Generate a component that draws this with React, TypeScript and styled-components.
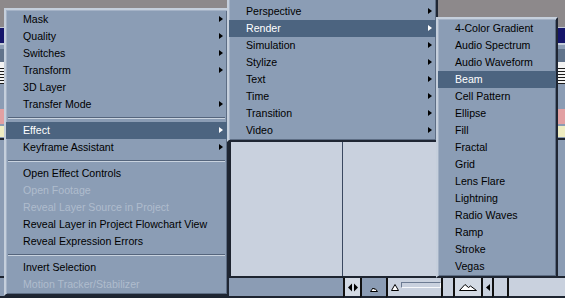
import React from "react";
import styled, { createGlobalStyle } from "styled-components";

const GlobalStyle = createGlobalStyle`
  html, body {
    margin: 0;
    padding: 0;
    background: #8b9cb4;
  }
`;

type MenuEntry =
  | { kind: "item"; label: string; sub?: boolean; active?: boolean; disabled?: boolean }
  | { kind: "sep" };

const item = (label: string, opts: { sub?: boolean; active?: boolean; disabled?: boolean } = {}): MenuEntry => ({
  kind: "item",
  label,
  ...opts,
});
const sep: MenuEntry = { kind: "sep" };

const layerMenu: MenuEntry[] = [
  item("Mask", { sub: true }),
  item("Quality", { sub: true }),
  item("Switches", { sub: true }),
  item("Transform", { sub: true }),
  item("3D Layer"),
  item("Transfer Mode", { sub: true }),
  sep,
  item("Effect", { sub: true, active: true }),
  item("Keyframe Assistant", { sub: true }),
  sep,
  item("Open Effect Controls"),
  item("Open Footage", { disabled: true }),
  item("Reveal Layer Source in Project", { disabled: true }),
  item("Reveal Layer in Project Flowchart View"),
  item("Reveal Expression Errors"),
  sep,
  item("Invert Selection"),
  item("Motion Tracker/Stabilizer", { disabled: true }),
];

// the list runs on above the screen edge, only the tail is visible
const effectMenu: MenuEntry[] = [
  "Perspective",
  "Render",
  "Simulation",
  "Stylize",
  "Text",
  "Time",
  "Transition",
  "Video",
].map((l) => item(l, { sub: true, active: l === "Render" }));

const renderMenu: MenuEntry[] = [
  "4-Color Gradient",
  "Audio Spectrum",
  "Audio Waveform",
  "Beam",
  "Cell Pattern",
  "Ellipse",
  "Fill",
  "Fractal",
  "Grid",
  "Lens Flare",
  "Lightning",
  "Radio Waves",
  "Ramp",
  "Stroke",
  "Vegas",
].map((l) => item(l, { active: l === "Beam" }));

/* ---------- background app ---------- */

const Screen = styled.div`
  position: relative;
  width: 565px;
  height: 298px;
  overflow: hidden;
  display: flex;
  flex-direction: column;
  background: #8b9cb4;
  font-family: "Liberation Sans", Arial, sans-serif;
`;

const TitleStrip = styled.div`
  height: 27px;
  flex: none;
  background: #8d898b;
  border-bottom: 1px solid #bfc8d4;
`;

const NavyBand = styled.div`
  height: 15px;
  flex: none;
  background: #15156a;
  border-bottom: 2px solid #c3ccd8;
`;

const TrackRow = styled.div<{ $h: number; $bg: string }>`
  height: ${(p) => p.$h}px;
  flex: none;
  background: ${(p) => p.$bg};
`;

const StripedRow = styled.div`
  height: 18px;
  flex: none;
  background: repeating-linear-gradient(
    to bottom,
    #f4f4f4 0px,
    #f4f4f4 2px,
    #1b1b1b 2px,
    #1b1b1b 3px
  );
`;

const Workspace = styled.div`
  height: 136px;
  flex: none;
  display: flex;
  border-top: 2px solid #1d2430;
`;

const LayerSide = styled.div`
  width: 229px;
  flex: none;
  background: #8b9cb4;
  border-right: 2px solid #1d2430;
`;

const GraphPanel = styled.div`
  flex: 1;
  display: flex;
  background: #c9d1de;
`;

const GraphColumn = styled.div`
  width: 111px;
  flex: none;
  border-right: 1px solid #3a4860;
`;

const GraphFill = styled.div`
  flex: 1;
`;

const ScrollColumn = styled.div`
  width: 8px;
  flex: none;
  background: #8b9cb4;
  border-left: 1px solid #2b3444;
`;

const BottomBar = styled.div`
  height: 20px;
  flex: none;
  display: flex;
  align-items: stretch;
  border-top: 2px solid #1d2430;
  background: #c9d1de;
`;

const BarSpacer = styled.div`
  width: 343px;
  flex: none;
  background: #8b9cb4;
  border-bottom: 2px solid #1d2430;
`;

const BarButton = styled.div<{ $w: number; $bg: string }>`
  width: ${(p) => p.$w}px;
  flex: none;
  display: flex;
  align-items: center;
  justify-content: center;
  background: ${(p) => p.$bg};
  border-left: 2px solid #111;
  border-bottom: 2px solid #1d2430;
`;

const SliderBox = styled.div`
  width: 50px;
  flex: none;
  display: flex;
  align-items: center;
  gap: 2px;
  padding-left: 3px;
  border-left: 2px solid #111;
  border-bottom: 2px solid #1d2430;
`;

const SliderTrack = styled.div`
  flex: 1;
  height: 4px;
  margin-top: -4px;
  border: 1px solid #f6f8fb;
  border-left-color: #6c7b92;
  border-top-color: #6c7b92;
`;

const BarFill = styled.div`
  flex: 1;
  border-left: 2px solid #111;
  border-bottom: 2px solid #1d2430;
`;

/* ---------- menus ---------- */

const MenuPanel = styled.div<{ $left: number; $top: number; $width: number; $openTop?: boolean }>`
  position: absolute;
  left: ${(p) => p.$left}px;
  top: ${(p) => p.$top}px;
  width: ${(p) => p.$width}px;
  box-sizing: border-box;
  padding: ${(p) => (p.$openTop ? "3px 0 1px" : "1px 0")};
  background: #8b9db5;
  border: 2px solid;
  border-top-width: ${(p) => (p.$openTop ? "0" : "2px")};
  border-color: #c5cfdc #1f2633 #1f2633 #c5cfdc;
  box-shadow: inset 1px ${(p) => (p.$openTop ? "0" : "1px")} 0 #a4b2c6, inset -1px -1px 0 #5d6d84;
`;

const MenuRow = styled.div<{ $active?: boolean; $disabled?: boolean }>`
  position: relative;
  height: 17px;
  line-height: 17px;
  padding-left: 17px;
  font-size: 10.6px;
  white-space: nowrap;
  background: ${(p) => (p.$active ? "#4c6480" : "transparent")};
  color: ${(p) => (p.$active ? "#ffffff" : p.$disabled ? "#afbccd" : "#000000")};
`;

const SubArrow = styled.span<{ $active?: boolean }>`
  position: absolute;
  right: 4px;
  top: 5px;
  width: 0;
  height: 0;
  border-left: 4px solid ${(p) => (p.$active ? "#ffffff" : "#000000")};
  border-top: 3.5px solid transparent;
  border-bottom: 3.5px solid transparent;
`;

const MenuSeparator = styled.div`
  margin: 4px 2px 3px;
  border-top: 1px solid #55657c;
  border-bottom: 1px solid #c9d3df;
`;

function Menu({
  entries,
  left,
  top,
  width,
  openTop,
}: {
  entries: MenuEntry[];
  left: number;
  top: number;
  width: number;
  openTop?: boolean;
}) {
  return (
    <MenuPanel $left={left} $top={top} $width={width} $openTop={openTop}>
      {entries.map((e, i) =>
        e.kind === "sep" ? (
          <MenuSeparator key={i} />
        ) : (
          <MenuRow key={i} $active={e.active} $disabled={e.disabled}>
            {e.label}
            {e.sub ? <SubArrow $active={e.active} /> : null}
          </MenuRow>
        )
      )}
    </MenuPanel>
  );
}

export default function App() {
  return (
    <>
      <GlobalStyle />
      <Screen>
        <TitleStrip />
        <NavyBand />
        <TrackRow $h={4} $bg="#8b9cb4" />
        <TrackRow $h={13} $bg="#61738b" />
        <TrackRow $h={4} $bg="#f2f2f2" />
        <StripedRow />
        <TrackRow $h={25} $bg="#8b9cb4" />
        <TrackRow $h={15} $bg="#e2a0a2" />
        <TrackRow $h={2} $bg="#8b9cb4" />
        <TrackRow $h={11} $bg="#efedc2" />
        <TrackRow $h={1} $bg="#8b9cb4" />
        <Workspace>
          <LayerSide />
          <GraphPanel>
            <GraphColumn />
            <GraphFill />
            <ScrollColumn />
          </GraphPanel>
        </Workspace>
        <BottomBar>
          <BarSpacer />
          <BarButton $w={15} $bg="#d3dae4">
            <svg width="10" height="9" viewBox="0 0 10 9">
              <path d="M0 4.5 L4 0.5 L4 8.5 Z M10 4.5 L6 0.5 L6 8.5 Z" fill="#000" />
            </svg>
          </BarButton>
          <BarButton $w={24} $bg="#8b9cb4">
            <svg width="8" height="5" viewBox="0 0 8 5" style={{ marginTop: 4 }}>
              <path d="M0.5 4.5 L3 1 L4 2.3 L5 1.5 L7.5 4.5 Z" fill="#fff" stroke="#000" strokeWidth="1" />
            </svg>
          </BarButton>
          <SliderBox>
            <svg width="8" height="7" viewBox="0 0 8 7">
              <path d="M0.5 6.5 L4 0.5 L7.5 6.5 Z" fill="#fff" stroke="#000" strokeWidth="1" />
            </svg>
            <SliderTrack />
          </SliderBox>
          <BarButton $w={10} $bg="#c9d1de" />
          <BarButton $w={26} $bg="#d3dae4">
            <svg width="18" height="8" viewBox="0 0 18 8">
              <path d="M0.5 7.5 L6 1.5 L9.5 4.5 L11.5 3 L17.5 7.5 Z" fill="#fff" stroke="#000" strokeWidth="1" />
            </svg>
          </BarButton>
          <BarButton $w={9} $bg="#c9d1de">
            <svg width="4" height="7" viewBox="0 0 4 7">
              <path d="M0 3.5 L4 0 L4 7 Z" fill="#000" />
            </svg>
          </BarButton>
          <BarButton $w={13} $bg="#c9d1de" />
          <BarFill />
        </BottomBar>

        <Menu entries={layerMenu} left={4} top={8} width={225} />
        <Menu entries={effectMenu} left={227} top={0} width={211} openTop />
        <Menu entries={renderMenu} left={436} top={17} width={122} />
      </Screen>
    </>
  );
}
